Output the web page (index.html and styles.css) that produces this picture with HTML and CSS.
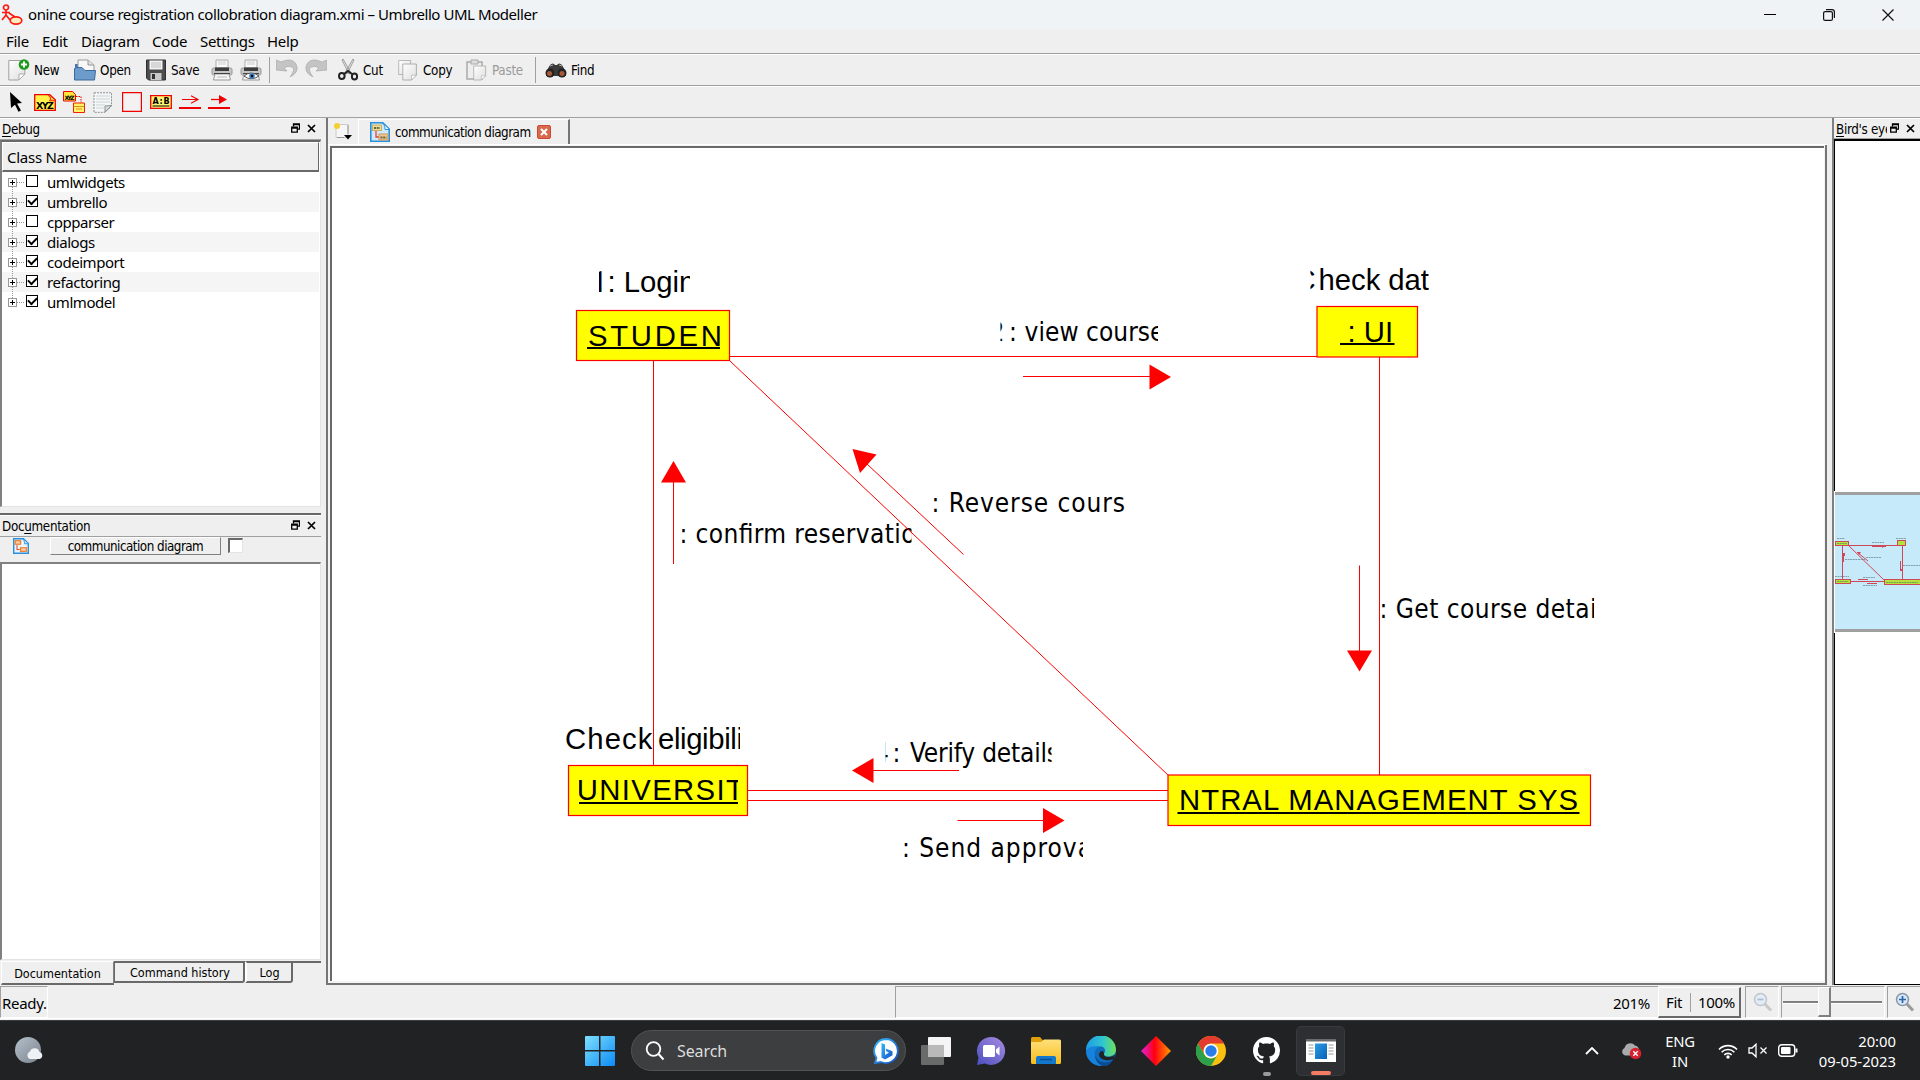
FILE: index.html
```html
<!DOCTYPE html>
<html lang="en">
<head>
<meta charset="utf-8">
<title>Umbrello UML Modeller</title>
<link rel="stylesheet" href="styles.css">
</head>
<body>
<svg class="defs" width="0" height="0">
  <defs>
    <linearGradient id="gWin" x1="0" y1="0" x2="1" y2="1"><stop offset="0" stop-color="#7fe0ff"/><stop offset="1" stop-color="#0a8bf5"/></linearGradient>
    <linearGradient id="gChat" x1="0" y1="1" x2="1" y2="0"><stop offset="0" stop-color="#4a4fc0"/><stop offset="1" stop-color="#a98be0"/></linearGradient>
    <linearGradient id="gFold" x1="0" y1="0" x2="0" y2="1"><stop offset="0" stop-color="#ffe07a"/><stop offset="1" stop-color="#f9bd1c"/></linearGradient>
    <linearGradient id="gEdge" x1="0" y1="0" x2="1" y2="0"><stop offset="0" stop-color="#1f9ae8"/><stop offset=".55" stop-color="#2fc5d0"/><stop offset="1" stop-color="#6fe05a"/></linearGradient>
    <linearGradient id="gDia" x1="0" y1="0" x2="1" y2="0"><stop offset="0" stop-color="#e020e0"/><stop offset=".45" stop-color="#ff0010"/><stop offset="1" stop-color="#ff9a00"/></linearGradient>
    <linearGradient id="gBing" x1="0" y1="0" x2="1" y2="1"><stop offset="0" stop-color="#35b8f5"/><stop offset="1" stop-color="#1450c8"/></linearGradient>
    <linearGradient id="gMoon" x1="0" y1="0" x2="1" y2="1"><stop offset="0" stop-color="#b4c0cc"/><stop offset="1" stop-color="#7b848e"/></linearGradient>
    <linearGradient id="gPrev" x1="0" y1="0" x2="1" y2="1"><stop offset="0" stop-color="#2a9be8"/><stop offset="1" stop-color="#0862b4"/></linearGradient>
    <linearGradient id="gPage" x1="0" y1="0" x2="1" y2="1"><stop offset="0" stop-color="#ffffff"/><stop offset="1" stop-color="#dedede"/></linearGradient>
    <symbol id="page" viewBox="0 0 20 22"><path d="M1 1h17v14l-6 6H1z" fill="url(#gPage)" stroke="#a0a0a0"/><path d="M18 15l-6 6v-6z" fill="#fff" stroke="#a8a8a8" stroke-width=".8"/></symbol>
    <symbol id="printer" viewBox="0 0 22 22"><path d="M5 1h12v8H5z" fill="#fafafa" stroke="#aaa"/><path d="M7 3h8M7 5h8" stroke="#ccc"/><rect x="1" y="9" width="20" height="7" rx="1.5" fill="#c4c4c4" stroke="#999"/><rect x="4" y="8.500" width="14" height="3.500" fill="#3c3c3c"/><path d="M4 15h14l1.500 6h-17z" fill="#f6f6f6" stroke="#999"/><path d="M3 14.500h16" stroke="#444"/><path d="M6 18h10" stroke="#bbb"/></symbol>
    <symbol id="float" viewBox="0 0 9 10"><path d="M2.500 3.500V.8h6v5.400H6.500M2.500 1.500h6" fill="none" stroke="#000" stroke-width="1.300"/><path d="M.7 4.200h5.600v5H.7zM.7 5h5.600" fill="none" stroke="#000" stroke-width="1.300"/></symbol>
    <symbol id="cross" viewBox="0 0 9 9"><path d="M1 1l7 7M8 1L1 8" stroke="#000" stroke-width="1.700"/></symbol>
    <symbol id="diagramIcon" viewBox="0 0 18 18"><path d="M.8.8h11l5.400 5.400v11H.8z" fill="#e6f4fd" stroke="#2a8fdc" stroke-width="1.600"/><path d="M11 1c2 2 2 4 2 5.500h4" fill="#bfe2fa" stroke="#2a8fdc"/><path d="M4.500 8v5h3" fill="none" stroke="#e3502a" stroke-width="1.200"/><rect x="2.500" y="3" width="6" height="4" fill="#fbd0a8" stroke="#f08030" stroke-width="1.400"/><rect x="8.500" y="11" width="6.500" height="4" fill="#fbd0a8" stroke="#f08030" stroke-width="1.400"/></symbol>
    <symbol id="diagramTabIcon" viewBox="0 0 20 20"><path d="M.8.8h12l6.400 6.400v12H.8z" fill="#cfe9fb" stroke="#2a8fdc" stroke-width="1.600"/><path d="M12.500 1c2.500 2 2.500 4.500 2.500 6.500h4" fill="#eef8ff" stroke="#2a8fdc"/><path d="M6 9v6h3" fill="none" stroke="#f0402a" stroke-width="1.300"/><rect x="2.500" y="3" width="9" height="5.500" fill="#e8dc9a" stroke="#c9b060"/><path d="M4 6h6" stroke="#6b6440" stroke-width="2" stroke-dasharray="2 .7"/><rect x="9" y="12" width="9" height="6" fill="#e8c890" stroke="#d09860"/><path d="M10.500 15.500h6" stroke="#6b6440" stroke-width="2" stroke-dasharray="2 .7"/></symbol>
    <symbol id="mag" viewBox="0 0 20 20"><path d="M11.500 11.500l6.500 7" stroke="#9a9a9a" stroke-width="3"/><circle cx="7.500" cy="7.500" r="6" fill="#d8e8f8" stroke="#8796a6" stroke-width="1.500"/></symbol>
  </defs>
</svg>
<div class="window">
  <header class="titlebar">
    <svg class="app-icon" viewBox="0 0 22 22" width="22" height="22"><g fill="none" stroke="#ff1a10" stroke-width="1.700"><circle cx="5" cy="3.500" r="2.500"/><path d="M5 6v6M1 8.500h8M5 11l-4 5M5 11l4 5M8 9l6 4"/><ellipse cx="15" cy="16.500" rx="5.800" ry="3.600" fill="#f9edc0"/></g></svg>
    <h1 class="title">onine course registration collobration diagram.xmi – Umbrello UML Modeller</h1>
    <div class="win-buttons">
      <svg width="12" height="12" viewBox="0 0 12 12"><path d="M0 5.500h12" stroke="#000"/></svg>
      <svg width="12" height="12" viewBox="0 0 12 12" fill="none" stroke="#111" stroke-width="1.200"><rect x=".6" y="2.600" width="8.800" height="8.800" rx="1.500"/><path d="M3 .6h6q2.400 0 2.400 2.400v6"/></svg>
      <svg width="12" height="12" viewBox="0 0 12 12"><path d="M.5.5l11 11M11.500.5l-11 11" stroke="#111" stroke-width="1.200"/></svg>
    </div>
  </header>
  <nav class="menubar">
    <span class="m-file">File</span><span class="m-edit">Edit</span><span class="m-diagram">Diagram</span><span class="m-code">Code</span><span class="m-settings">Settings</span><span class="m-help">Help</span>
  </nav>
  <div class="toolbar main-tools">
    <div class="tool t-new"><svg width="22" height="22" viewBox="0 0 22 22"><path d="M.8 1.500h16V15l-6 6H.8z" fill="url(#gPage)" stroke="#a0a0a0"/><path d="M17 15l-6 6v-6z" fill="#fff" stroke="#aaa"/><circle cx="16" cy="5.500" r="5.300" fill="#1d9a1d"/><path d="M16 2.500v6M13 5.500h6" stroke="#fff" stroke-width="2"/></svg><span>New</span></div>
    <div class="tool t-open"><svg width="22" height="22" viewBox="0 0 22 22"><path d="M1 5h8v12H1z" fill="#4578b0"/><path d="M4 1h10l6 5v9H4z" fill="#f8f8f8" stroke="#999"/><path d="M14 1v5h6" fill="#ddd" stroke="#999"/><path d="M.5 9.500l2-1H8l3 3h10.500l-1 9.500H.5z" fill="#6c9ccc" stroke="#40699b"/></svg><span>Open</span></div>
    <div class="tool t-save"><svg width="20" height="22" viewBox="0 0 20 22"><path d="M.5 1h19v20h-17l-2-2z" fill="#4c4c4c" stroke="#303030"/><path d="M3.500 1.500h13v9h-13z" fill="#f4f4f4"/><path d="M5 4h10M5 6h10M5 8h10" stroke="#bbb"/><path d="M4.500 14h11v7h-11z" fill="#cacaca"/><path d="M6 15h3v5H6z" fill="#333"/></svg><span>Save</span></div>
    <div class="tool t-print"><svg width="22" height="22"><use href="#printer"/></svg></div>
    <div class="tool t-preview"><svg width="22" height="22" viewBox="0 0 22 22"><use href="#printer" width="22" height="22"/><path d="M4 17q7-6 15 0-8 5.500-15 0z" fill="#fff" stroke="#555"/><circle cx="12" cy="17" r="2.800" fill="#3a7cc0"/><circle cx="12" cy="17" r="1.200"/></svg></div>
    <i class="sep"></i>
    <div class="tool t-undo"><svg width="22" height="18" viewBox="0 0 22 18"><path d="M0 1l5 2q11-5 15 2 4 8-6 13 6-8 2-10-4-2-8 1l3 3-11-1z" fill="#c4c4c4" stroke="#adadad" stroke-width=".8"/></svg></div>
    <div class="tool t-redo"><svg width="22" height="18" viewBox="0 0 22 18"><path d="M22 1l-5 2Q6-2 2 5q-4 8 6 13-6-8-2-10 4-2 8 1l-3 3 11-1z" fill="#c4c4c4" stroke="#adadad" stroke-width=".8"/></svg></div>
    <div class="tool t-cut"><svg width="21" height="22" viewBox="0 0 21 22"><path d="M4 1l1-1 8 14-2 1zM16 1l-1-1-8 14 2 1z" fill="#e8e8e8" stroke="#888" stroke-width=".8"/><g fill="none" stroke="#222" stroke-width="2"><ellipse cx="3.800" cy="17" rx="2.800" ry="3"/><ellipse cx="16.500" cy="17.500" rx="2.600" ry="3"/><path d="M6 15l4-3 4 3"/></g></svg><span>Cut</span></div>
    <div class="tool t-copy"><svg width="20" height="22" viewBox="0 0 20 22"><use href="#page" width="14" height="17"/><use href="#page" x="4" y="4" width="16" height="18"/></svg><span>Copy</span></div>
    <div class="tool t-paste"><svg width="22" height="22" viewBox="0 0 22 22"><path d="M1 3h15v17H1z" fill="#eee" stroke="#aaa" stroke-width="1.500"/><path d="M5 1h7v4H5z" fill="#ddd" stroke="#aaa"/><use href="#page" x="7" y="6" width="14" height="16"/></svg><span>Paste</span></div>
    <i class="sep"></i>
    <div class="tool t-find"><svg width="22" height="15" viewBox="0 0 22 15"><path d="M5 2q3-3 5 0h2q2-3 5 0l4 7v4H1V9z" fill="#3a3a3a"/><circle cx="5" cy="10" r="4.500" fill="#222"/><circle cx="17" cy="10" r="4.500" fill="#222"/><circle cx="4.500" cy="10.500" r="2.500" fill="#a85a34"/><circle cx="17" cy="10.500" r="2.500" fill="#a85a34"/><path d="M5 3l3-1M14 2l3 1" stroke="#aaa"/></svg><span>Find</span></div>
  </div>
  <div class="toolbar work-tools">
    <svg width="13" height="20" viewBox="0 0 13 20"><path d="M0 0l12 11-5 .5 4 7-2.500 1.200-3.500-7L1 16z"/></svg>
    <svg width="22" height="17" viewBox="0 0 22 17"><path d="M.7.7h15l5.600 5v10.600H.7z" fill="#fff34a" stroke="#f00000" stroke-width="1.300"/><path d="M14 1q4 3 2 5.500h5" fill="none" stroke="#f04020" stroke-width="1.300"/><text x="2" y="14.500" class="ico-b" font-size="9.500" textLength="18">XYZ</text></svg>
    <svg width="22" height="22" viewBox="0 0 22 22"><path d="M.5.5h9l3 3v6.500H.5z" fill="#ffe23a" stroke="#f00000"/><text x="1.500" y="8.500" class="ico-b" font-size="6" textLength="10">XYZ</text><path d="M13 5.500h5v6" fill="none" stroke="#f00000" stroke-dasharray="1.500 1"/><path d="M10.500 12h11v9.500h-11z" fill="#fff36a" stroke="#f02000"/><path d="M10.500 15.500h11M13 18h6" stroke="#e08a20"/></svg>
    <svg width="20" height="21" viewBox="0 0 20 21"><path d="M1 .8h17.500V14L12 20.300H1z" fill="#f4f7f7" stroke="#8a9090" stroke-dasharray="2 1"/><path d="M3 4h14M3 7h14M3 10h14M3 13h9M3 16h8" stroke="#ccd4d4"/><path d="M18.500 13.500L12 20v-6z" fill="#d8dede" stroke="#8a9090"/></svg>
    <svg width="20" height="20" viewBox="0 0 20 20"><path d="M.6.6h18.800v18.800H.6z" fill="#f3f1f1" stroke="#f00000" stroke-width="1.200"/></svg>
    <svg width="22" height="14" viewBox="0 0 22 14"><path d="M.7.7h20.600v12.600H.7z" fill="#fff56e" stroke="#f00000" stroke-width="1.300"/><text x="2.500" y="9" class="ico-b" font-size="8" textLength="17">A:B</text><path d="M2.500 11h17" stroke="#000"/></svg>
    <svg width="22" height="14" viewBox="0 0 22 14"><path d="M3 4.500h15M12 .8l7 3.700-7 3.700" fill="none" stroke="#f00000" stroke-width="1.100"/><path d="M0 13h22" stroke="#f00000" stroke-width="2"/></svg>
    <svg width="22" height="14" viewBox="0 0 22 14"><path d="M3 4.500h12" stroke="#f00000" stroke-width="1.300"/><path d="M11 0l8 4.500L11 9z" fill="#f00000"/><path d="M0 13h22" stroke="#f00000" stroke-width="2"/></svg>
  </div>

  <div class="workspace">
    <aside class="left">
      <section class="dock debug">
        <div class="dock-head"><span class="w-debug"><u>D</u>ebug</span><svg class="dk-float" width="9" height="10"><use href="#float"/></svg><svg width="9" height="9"><use href="#cross"/></svg></div>
        <div class="tree">
          <div class="tree-head">Class Name</div>
          <ul class="tree-list">
            <li><i class="plus"></i><i class="check"></i><span>umlwidgets</span></li>
            <li><i class="plus"></i><i class="check on"></i><span>umbrello</span></li>
            <li><i class="plus"></i><i class="check"></i><span>cppparser</span></li>
            <li><i class="plus"></i><i class="check on"></i><span>dialogs</span></li>
            <li><i class="plus"></i><i class="check on"></i><span>codeimport</span></li>
            <li><i class="plus"></i><i class="check on"></i><span>refactoring</span></li>
            <li><i class="plus"></i><i class="check on"></i><span>umlmodel</span></li>
          </ul>
        </div>
      </section>
      <section class="dock docs">
        <div class="dock-head"><span class="w-doc">Doc<u>u</u>mentation</span><svg class="dk-float" width="9" height="10"><use href="#float"/></svg><svg width="9" height="9"><use href="#cross"/></svg></div>
        <div class="doc-bar"><svg width="16" height="16"><use href="#diagramIcon"/></svg><div class="doc-name"><span>communication diagram</span></div><i class="doc-check"></i></div>
        <div class="doc-text"></div>
        <div class="dock-tabs"><span class="tab active">Documentation</span><span class="tab hist">Command history</span><span class="tab log">Log</span><i class="fill"></i></div>
      </section>
    </aside>

    <main class="editor">
      <div class="doc-tabs">
        <svg class="new-tab" width="20" height="19" viewBox="0 0 20 19"><path d="M3 2.500h12v13H3z" fill="#f6f6f6" stroke="#ccc"/><path d="M15 3v9M4 15.500h7" stroke="#999"/><circle cx="4" cy="4" r="3" fill="#f5cf30"/><path d="M11 13h8l-4 4.500z"/></svg>
        <div class="doc-tab"><svg width="20" height="20"><use href="#diagramTabIcon"/></svg><span>communication diagram</span><i class="close"><svg width="8" height="8" viewBox="0 0 8 8"><path d="M1 1l6 6M7 1L1 7" stroke="#fff" stroke-width="2"/></svg></i></div>
      </div>
      <div class="canvas">
        <svg class="diagram" width="1492" height="833" viewBox="332 148 1492 833">
          <g fill="#ff0" stroke="#f00" stroke-width="1.200">
            <rect x="576.500" y="310.500" width="153" height="50"/>
            <rect x="1317" y="306.500" width="100.500" height="50.500"/>
            <rect x="568.500" y="765.500" width="179" height="50"/>
            <rect x="1168" y="775" width="422.500" height="50.500"/>
          </g>
          <g class="uml" transform="translate(0 -.8)">
            <svg x="599" y="260" width="91" height="45" viewBox="599 260 91 45"><text x="591" y="292.500"><tspan class="one">1</tspan><tspan x="607.400">: Login</tspan></text></svg>
            <svg x="1310.500" y="260" width="118.500" height="45" viewBox="1310.500 260 118.500 45"><text x="1294.500" y="291">C<tspan x="1318.500" textLength="110.500">heck dat</tspan></text></svg>
            <svg x="560" y="720" width="180" height="45" viewBox="560 720 180 45"><text x="565" y="750" textLength="87.500">Check</text><text x="658" y="750" textLength="107">eligibility</text></svg>
            <text x="588" y="346.500" textLength="134">STUDEN</text>
            <text x="1347.500" y="342.500">: UI</text>
            <svg x="579" y="770" width="159" height="40" viewBox="579 770 159 40"><text x="576.800" y="801" textLength="167">UNIVERSIT</text></svg>
            <text x="1179" y="811" textLength="399">NTRAL MANAGEMENT SYS</text>
          </g>
          <path d="M587 348h133M1340 344h54.500M579 803h159M1177.500 813h402" stroke="#000" stroke-width="2"/>
          <g class="msg" transform="translate(0 -.5)">
            <svg x="1000.500" y="310" width="157.500" height="45" viewBox="1000.500 310 157.500 45"><text x="989.500" y="341">2<tspan x="1009">:</tspan><tspan x="1024.500" textLength="140">view course</tspan></text></svg>
            <svg x="681.500" y="515" width="230" height="45" viewBox="681.500 515 230 45"><text x="679.500" y="543" textLength="236">: confirm reservatio</text></svg>
            <text x="931.500" y="512" textLength="193.500">: Reverse cours</text>
            <svg x="1378" y="590" width="216" height="45" viewBox="1378 590 216 45"><text x="1379.500" y="618" textLength="217">: Get course detai</text></svg>
            <svg x="885.500" y="735" width="166" height="45" viewBox="885.500 735 166 45"><text x="874" y="762">4<tspan x="892.500">:</tspan><tspan x="910" textLength="149">Verify details</tspan></text></svg>
            <svg x="900" y="830" width="183" height="45" viewBox="900 830 183 45"><text x="902" y="857" textLength="190">: Send approva</text></svg>
          </g>
          <g fill="none" stroke="#f00" stroke-width="1">
            <path d="M730 356.500h587M653.500 361v404.500M730 361l438 414M1379.500 357v418M748 790.500h420M748 800.500h420"/>
            <path d="M1023 376.500h128M673.500 480v84M867 464l96.500 90.500M1359.500 565.500v86M872 770.500h87M957.500 820.500h87"/>
          </g>
          <path d="M1149.500 364.500l21.500 12.500-21.500 12.500zM673.500 461l12.500 21.500h-25zM852.500 449l24 5.500-16.500 18.500zM1347 650.500h25l-12.500 21zM852 770.500l21.500-12.500v25zM1043 808l21.500 12.500-21.500 12.500z" fill="#f00"/>
        </svg>
      </div>
    </main>

    <aside class="bird">
      <div class="dock-head"><span class="w-bird"><u>B</u>ird's eye</span><svg class="dk-float" width="9" height="10"><use href="#float"/></svg><svg width="9" height="9"><use href="#cross"/></svg></div>
      <div class="overview">
        <div class="viewport">
          <svg width="85" height="133" viewBox="1835 481 85 133">
            <g fill="#b4e23c" stroke="#d04858"><rect x="1835.500" y="527.500" width="13" height="4"/><rect x="1897.500" y="526.500" width="8" height="5"/><rect x="1835.500" y="565.500" width="15" height="4"/><rect x="1884.500" y="565.500" width="37" height="5"/></g>
            <path d="M1849 531.500h49M1842.500 532v33M1849 532l35 34M1902.500 532v33M1851 567.500h33M1872 532.500h14M1843.500 539v9M1857 538l11 9M1900.500 547v10M1858 565.500h10M1867 569.500h10" fill="none" stroke="#d04858"/>
            <path d="M1885 532l-3-1v3zM1843 539h2v3h-2zM1857 538l4 0-2 3zM1900 555h3v2h-3z" fill="#d04858"/>
            <path d="M1837 524.500h8M1896 524.500h10M1872 528.500h12M1845 545.500h20M1866 543.500h15M1903 551.500h17M1835 562.500h14M1863 563.500h12M1863 571.500h14M1837 529.500h10M1837 567.500h11M1886 568.500h32" stroke="#4a6070" stroke-opacity=".55" stroke-dasharray="2 .6"/>
          </svg>
        </div>
      </div>
    </aside>
  </div>

  <footer class="statusbar">
    <div class="cell ready">Ready.</div>
    <div class="cell message"><span class="zoom-val">201%</span></div>
    <div class="zoom-buttons"><span class="fit">Fit</span><span class="full">100%</span></div>
    <div class="cell zoom-out"><svg width="20" height="20" opacity=".45" viewBox="0 0 20 20"><use href="#mag" width="20" height="20"/><path d="M4.500 7.500h6" stroke="#4a86c8" stroke-width="1.700"/></svg></div>
    <div class="cell slider"><i class="handle"></i></div>
    <div class="cell zoom-in"><svg width="20" height="20" viewBox="0 0 20 20"><use href="#mag" width="20" height="20"/><path d="M4 7.500h7M7.500 4v7" stroke="#2a66a8" stroke-width="1.700"/></svg></div>
  </footer>
</div>

<div class="taskbar">
  <svg class="weather" width="30" height="28" viewBox="0 0 30 28"><circle cx="13" cy="13" r="13" fill="url(#gMoon)"/><path d="M15 22a4 4 0 0 1 0-7.500 5 5 0 0 1 9.500.5 3.600 3.600 0 0 1 0 7z" fill="#eef1f5"/></svg>
  <svg class="start" width="30" height="30" viewBox="0 0 30 30"><path d="M0 1q0-1 1-1h13v14H0zM15.500 0H29q1 0 1 1v13H15.500zM0 15.500h14V30H1q-1 0-1-1zM15.500 15.500H30V29q0 1-1 1H15.500z" fill="url(#gWin)"/></svg>
  <div class="search"><svg width="20" height="20" viewBox="0 0 20 20"><circle cx="8.500" cy="8" r="6.800" fill="none" stroke="#fff" stroke-width="1.800"/><path d="M13.500 13l5 5.500" stroke="#fff" stroke-width="2"/></svg><span>Search</span>
    <svg class="bing" width="26" height="26" viewBox="0 0 26 26"><path d="M13 1a12 12 0 1 1-5 23l-6 1 1.500-5A12 12 0 0 1 13 1z" fill="#fff" stroke="url(#gBing)" stroke-width="1.800"/><path d="M8.500 5l3.500 1.500v10.500l4-2.500-2.500-1-1-3 7 2.800v4L12 21.500l-3.500-2z" fill="url(#gBing)"/></svg></div>
  <svg class="tb-icon tasks" width="30" height="28" viewBox="0 0 30 28"><rect x="7" y="0" width="23" height="20" rx="1" fill="#f4f4f4"/><rect x="0" y="8" width="23" height="20" rx="1" fill="#777" fill-opacity=".85"/><rect x="7" y="8" width="16" height="12" fill="#b9b9b9"/></svg>
  <svg class="tb-icon chat" width="30" height="30" viewBox="0 0 30 30"><path d="M15 1a14 14 0 1 1-6 26.600L1 29l1.500-7.500A14 14 0 0 1 15 1z" fill="url(#gChat)"/><rect x="7" y="9" width="12" height="12" rx="1.500" fill="#fff"/><path d="M20 13.500l3.500-3v9L20 16.500z" fill="#fff"/></svg>
  <svg class="tb-icon files" width="30" height="27" viewBox="0 0 30 27"><path d="M0 1.500Q0 0 1.500 0H9l3 3.500V8H0z" fill="#e0a008"/><path d="M0 5h10l3-2.500h15.500Q30 2.500 30 4v21.500q0 1.500-1.500 1.500h-27Q0 27 0 25.500z" fill="url(#gFold)"/><path d="M5 27v-6q0-2 2-2h16q2 0 2 2v6z" fill="#1478cc"/><path d="M9 22.500h12" stroke="#0a4f94" stroke-width="1.500"/></svg>
  <svg class="tb-icon edge" width="30" height="30" viewBox="0 0 30 30"><circle cx="15" cy="15" r="15" fill="#0f6cbd"/><path d="M0 15a15 15 0 0 1 30-1.500c0 5-4 7-7.500 7-4 0-5-1.500-4.500-3 2-2 1.500-7-4-7C7 10.500 1 13 0 15z" fill="url(#gEdge)"/><path d="M0 15c2-4 8-6 13-4-4 2-5 6-4 9.500 1 4.500 5 8 9 9A15 15 0 0 1 0 15z" fill="#1682dc"/><path d="M9.500 19c0 4 5 8 10.500 7.500 3.500-.3 6-2 7.500-3.500-3 7-9 8-11 7-5-2-8-7-7-11z" fill="#0c4a92"/><path d="M18 17.500c-.5 2 1 3.500 4.500 3.500 3 0 5-.8 6.500-2.500l-1 4.500c-4 2-14 2-15-4 0-2.500 2-4 3-4 1.500 0 2 1.500 2 2.500z" fill="#202224"/></svg>
  <svg class="tb-icon dia" width="30" height="30" viewBox="0 0 30 30"><path d="M15 0l15 15-15 15L0 15z" fill="url(#gDia)"/></svg>
  <svg class="tb-icon chrome" width="30" height="30" viewBox="0 0 30 30"><circle cx="15" cy="15" r="15" fill="#fbbf12"/><path d="M2 7.500A15 15 0 0 1 28 7.500H15A7.500 7.500 0 0 0 8.500 18.800z" fill="#e33b2e"/><path d="M2 7.500l6.500 11.300A7.500 7.500 0 0 0 21.500 18.800L15 30A15 15 0 0 1 2 7.500z" fill="#2da04a"/><circle cx="15" cy="15" r="7.300" fill="#fff"/><circle cx="15" cy="15" r="5.700" fill="#2b7de9"/></svg>
  <div class="tb-run github"><svg width="27" height="27" viewBox="0 0 16 16"><path fill="#fff" d="M8 0C3.580 0 0 3.580 0 8c0 3.540 2.290 6.530 5.470 7.590.4.070.55-.17.55-.38 0-.19-.01-.82-.01-1.490-2.010.37-2.530-.49-2.690-.94-.09-.23-.48-.94-.82-1.130-.28-.15-.68-.52-.01-.53.63-.01 1.080.58 1.230.82.72 1.210 1.870.87 2.330.66.07-.52.28-.87.51-1.070-1.780-.2-3.640-.89-3.640-3.950 0-.87.31-1.590.82-2.150-.08-.2-.36-1.020.08-2.120 0 0 .67-.21 2.200.82.64-.18 1.320-.27 2-.27s1.360.09 2 .27c1.530-1.040 2.200-.82 2.200-.82.44 1.100.16 1.920.08 2.120.51.56.82 1.270.82 2.150 0 3.070-1.870 3.750-3.650 3.950.29.25.54.73.54 1.480 0 1.070-.01 1.930-.01 2.200 0 .21.15.46.55.38A8.010 8.010 0 0 0 16 8c0-4.420-3.580-8-8-8z"/></svg><i class="dot"></i></div>
  <div class="tb-run current"><svg width="30" height="23" viewBox="0 0 30 23"><rect width="30" height="23" fill="#fff"/><path d="M0 0h30v2.500H0z" fill="#6c6c6c"/><path d="M2.500 6h5M2.500 9h5M2.500 12h5M2.500 15h5M22.500 6h5M22.500 9h5M22.500 12h5M22.500 15h5" stroke="#999"/><rect x="9" y="4.500" width="12" height="15.500" fill="url(#gPrev)"/></svg><i class="dot"></i></div>
  <div class="tray">
    <svg class="chev" width="14" height="8" viewBox="0 0 14 8"><path d="M1 7l6-6 6 6" fill="none" stroke="#fff" stroke-width="1.800"/></svg>
    <svg class="cloud" width="21" height="18" viewBox="0 0 21 18"><path d="M4 13.500A4 4 0 0 1 3.500 6 6 6 0 0 1 14 3.500 5 5 0 0 1 18 8l-4 5.500z" fill="#aaa"/><circle cx="14.500" cy="11.500" r="5.800" fill="#d8202e"/><path d="M12.300 9.300l4.400 4.400M16.700 9.300l-4.400 4.400" stroke="#fff" stroke-width="1.400"/></svg>
    <div class="lang"><span>ENG</span><span>IN</span></div>
    <svg class="wifi" width="20" height="16" viewBox="0 0 20 16"><g fill="none" stroke="#fff" stroke-width="1.600"><path d="M1 6.500a12.500 12.500 0 0 1 18 0M3.600 9.200a9 9 0 0 1 12.800 0M6.300 11.900a5.200 5.200 0 0 1 7.400 0"/></g><circle cx="10" cy="14" r="1.700" fill="#fff"/></svg>
    <svg class="mute" width="20" height="15" viewBox="0 0 20 15"><path d="M1 5h3l4-3.800v12.600L4 10H1z" fill="none" stroke="#fff" stroke-width="1.300"/><path d="M12.500 4.500l6 6M18.500 4.500l-6 6" stroke="#fff" stroke-width="1.300"/></svg>
    <svg class="batt" width="20" height="13" viewBox="0 0 20 13"><rect x=".7" y=".7" width="16" height="11.600" rx="3" fill="none" stroke="#fff" stroke-width="1.400"/><rect x="3" y="3" width="9.500" height="7" rx="1" fill="#fff"/><path d="M18.500 4.500v4" stroke="#fff" stroke-width="2"/></svg>
    <div class="clock"><span>20:00</span><span>09-05-2023</span></div>
  </div>
</div>
</body>
</html>
```
FILE: styles.css
```css
* { box-sizing: border-box; }
body { margin: 0; width: 1920px; height: 1080px; overflow: hidden; background: #efefef; color: #000; font: 13.3px "DejaVu Sans Condensed", "DejaVu Sans", sans-serif; display: flex; flex-direction: column; }
.defs { position: absolute; }
svg { display: block; flex: none; }
i { font-style: normal; display: block; flex: none; }
span { white-space: nowrap; }
.ico-b { font-family: "DejaVu Sans", sans-serif; font-weight: bold; }

.window { height: 1020px; display: flex; flex-direction: column; }
.titlebar { height: 29px; background: #f0f3f6; display: flex; align-items: center; padding-left: 1px; }
.title { margin: 0 0 1px 5px; font: 400 15px/28px "Noto Sans", sans-serif; letter-spacing: -0.44px; }
.win-buttons { margin-left: auto; display: flex; gap: 47px; padding-right: 26px; }

.menubar { height: 25px; border-bottom: 1px solid #a0a0a0; display: flex; font: 15px/24px "Noto Sans", sans-serif; letter-spacing: -0.3px; padding-left: 6px; }
.m-file { width: 36px; }
.m-edit { width: 39px; }
.m-diagram { width: 71px; }
.m-code { width: 48px; }
.m-settings { width: 67px; }

.toolbar { border-top: 1px solid #fff; border-bottom: 1px solid #a0a0a0; display: flex; align-items: center; height: 32px; }
.main-tools { padding-left: 8px; }
.tool { display: flex; align-items: center; gap: 4px; letter-spacing: -0.25px; }
.t-new { width: 66px; } .t-open { width: 72px; } .t-save { width: 65px; gap: 5px; }
.t-print { width: 29px; } .t-preview { width: 29px; } .t-undo { width: 29px; padding-bottom: 5px; } .t-redo { width: 33px; padding-bottom: 5px; }
.t-cut { width: 60px; } .t-copy { width: 68px; gap: 5px; } .t-paste { width: 69px; color: #9a9a9a; }
.sep { width: 1px; height: 26px; background: #a0a0a0; margin-right: 6px; }
.t-paste + .sep { margin-right: 9px; }
.work-tools { padding-left: 10px; height: 32px; }
.work-tools svg { margin-right: 7px; }
.work-tools svg:nth-child(1) { margin-right: 11px; }
.work-tools svg:nth-child(3) { margin-right: 8px; }
.work-tools svg:nth-child(4) { margin-right: 9px; }
.work-tools svg:nth-child(5) { margin-right: 8px; }

.workspace { height: 867px; display: flex; }
.left { width: 326px; display: flex; flex-direction: column; }
.dock { width: 321px; }
.debug { height: 396px; }
.dock-head { height: 22px; display: flex; align-items: flex-start; line-height: 20px; padding: 1px 5px 0 2px; border-top: 1px solid #fff; border-bottom: 1px solid #a0a0a0; letter-spacing: -0.3px; }
.dock-head u { text-underline-offset: 2px; }
.dock-head .dk-float { margin: 3px 7px 0 auto; }
.dock-head svg:last-child { margin-top: 4px; }
.tree { height: 367px; border: 1px solid #a0a0a0; border-top: 2px solid #696969; border-right-color: #e3e3e3; border-bottom-color: #e3e3e3; border-left: 2px solid #808080; background: #fff; font: 15px/20px "Noto Sans", sans-serif; letter-spacing: -0.45px; }
.tree-head { height: 30px; width: 317px; background: #efefef; border: 1px solid #fff; border-right: 1px solid #696969; border-bottom: 2px solid #696969; padding-left: 4px; line-height: 28px; letter-spacing: -0.25px; }
.tree-list { list-style: none; margin: 0; padding: 0; width: 317px; }
.tree-list li { height: 20px; display: flex; align-items: flex-start; padding-left: 6px; }
.tree-list li:nth-child(even) { background: #f5f5f5; }
.plus { width: 9px; height: 9px; margin: 6px 9px 0 0; border: 1px solid #999; background: linear-gradient(#000, #000) 1px 3px / 5px 1px no-repeat, linear-gradient(#000, #000) 3px 1px / 1px 5px no-repeat, #fff; position: relative; }
.plus::before { content: ""; position: absolute; left: 3px; top: 8px; height: 11px; border-left: 1px dotted #999; }
.plus::after { content: ""; position: absolute; left: 8px; top: 3px; width: 7px; border-top: 1px dotted #999; }
li:last-child .plus::before { display: none; }
.check { width: 12px; height: 12px; margin: 3px 9px 0 0; border: 1px solid #000; background: #fff; position: relative; }
.check.on::after { content: ""; position: absolute; left: 1px; top: 1px; width: 7px; height: 4px; border: solid #000; border-width: 0 0 2px 2px; transform: rotate(-45deg); }

.docs { border-top: 2px solid #696969; margin-top: -1px; height: 472px; display: flex; flex-direction: column; }
.doc-bar { height: 25px; display: flex; align-items: flex-start; padding: 1px 0 0 13px; }
.doc-name { width: 171px; height: 18px; margin: -1px 7px 0 21px; border: 1px solid #fff; border-right-color: #808080; border-bottom-color: #808080; text-align: center; line-height: 17px; letter-spacing: -0.5px; }
.doc-check { width: 15px; height: 15px; border: 1px solid #e3e3e3; border-top: 2px solid #696969; border-left: 2px solid #696969; background: #fff; }
.doc-text { height: 398px; background: #fff; border: 2px solid #808080; border-width: 2px 1px 1px 2px; border-right-color: #e3e3e3; border-bottom-color: #e3e3e3; }
.dock-tabs { display: flex; align-items: flex-start; margin-top: 1px; font-size: 12.5px; }
.tab { border: 1px solid #696969; text-align: center; }
.tab.active { width: 113px; height: 24px; margin-left: 1px; border-color: #fff #808080 #696969 #fff; border-bottom-width: 2px; line-height: 24px; }
.tab.hist { width: 131px; height: 22px; border-width: 2px 2px 2px 1px; line-height: 20px; border-radius: 0 0 3px 0; padding-left: 2px; }
.tab.log { width: 48px; height: 22px; border-width: 2px; border-left-color: #fff; line-height: 20px; border-radius: 0 0 3px 0; padding-left: 1px; }
.fill { flex: 1; border-top: 2px solid #696969; }

.editor { width: 1501px; border-left: 2px solid #757575; display: flex; flex-direction: column; }
.doc-tabs { height: 27px; display: flex; align-items: flex-start; border-bottom: 1px solid #fff; }
.new-tab { margin: 4px 5px 0 5px; }
.doc-tab { width: 212px; height: 25px; display: flex; align-items: center; padding-left: 11px; border-top: 1px solid #fff; border-left: 1px solid #fff; border-right: 2px solid #757575; margin-top: 1px; letter-spacing: -0.5px; }
.doc-tab span { margin-left: 5px; width: 138px; }
.close { width: 14px; height: 14px; border-radius: 2px; background: #d86a50; border: 1px solid #c84a30; display: flex; align-items: center; justify-content: center; margin-left: 4px; }
.canvas { height: 840px; border-right: 2px solid #757575; border-bottom: 2px solid #757575; padding: 1px 1px 1px 2px; background: #f4f4f4; }
.diagram { background: #fff; border-top: 2px solid #696969; border-left: 2px solid #696969; width: 1494px; height: 835px; }
.uml { font: 29.3px "Liberation Sans", sans-serif; }
.one { font-family: Roboto, sans-serif; }
.msg { font: 26px "DejaVu Sans Condensed", "DejaVu Sans", sans-serif; }

.bird { width: 88px; margin-left: 5px; border-left: 2px solid #808080; }
.bird .dock-head { height: 21px; padding-right: 5px; }
.bird .w-bird { width: 51px; overflow: hidden; }
.overview { height: 846px; background: #fff; border: 1px solid #000; border-right: 0; padding-top: 351px; border-top-width: 2px; }
.viewport { border: 3px solid #a0a0a0; border-width: 3px 0; height: 140px; background: #c6eafa; outline: 1px solid #fff; }

.statusbar { height: 34px; display: flex; border-bottom: 1px solid #fff; font: 15px/29px "Noto Sans", sans-serif; letter-spacing: -0.3px; padding-top: 1px; }
.cell { height: 32px; border: 1px solid #a0a0a0; border-right-color: #fff; border-bottom-color: #fff; display: flex; align-items: center; }
.ready { width: 48px; padding-left: 1px; padding-top: 2px; }
.message { width: 763px; margin-left: 847px; border-right: 0; padding-left: 717px; padding-top: 2px; }
.zoom-buttons { width: 83px; height: 31px; margin-top: 1px; border: 1px solid #fff; border-right: 2px solid #696969; border-bottom: 2px solid #696969; display: flex; padding-left: 7px; align-items: center; }
.fit { width: 24px; }
.full { border-left: 1px solid #a0a0a0; padding-left: 7px; line-height: 19px; }
.zoom-out { width: 34px; margin-left: 4px; padding-left: 7px; }
.slider { width: 104px; margin-left: 2px; padding-left: 36px; background: linear-gradient(#808080 0 2px, #fff 2px 3px) 1px 14px / 99px 3px no-repeat; }
.handle { width: 13px; height: 30px; background: #efefef; border: 1px solid #fff; border-right: 2px solid #808080; border-bottom: 2px solid #808080; }
.zoom-in { flex: 1; margin-left: 2px; padding-left: 7px; border-right: 0; }

.taskbar { height: 60px; background: #202224; border-top: 1px solid #3a3f42; display: flex; align-items: center; color: #fff; font-family: "Noto Sans", sans-serif; }
.weather { margin-left: 15px; }
.start { margin-left: 540px; }
.search { width: 275px; height: 41px; margin-left: 16px; border-radius: 21px; background: #3c3e40; border: 1px solid #515355; display: flex; align-items: center; padding-left: 13px; font-size: 16px; color: #ddd; }
.search span { margin-left: 12px; letter-spacing: -0.1px; }
.bing { margin: 0 6px 0 auto; }
.tb-icon { margin-left: 25px; }
.tasks { margin-left: 15px; }
.github { margin-left: 16px; }
.tb-run { width: 49px; height: 50px; display: flex; flex-direction: column; align-items: center; justify-content: center; position: relative; }
.dot { position: absolute; bottom: 0; width: 8px; height: 4px; border-radius: 2px; background: #9a9a9a; }
.current { margin-left: 5px; background: #2d2f32; border: 1px solid #383a3d; border-radius: 5px; }
.current .dot { width: 20px; background: #f47c62; }
.tray { margin-left: auto; display: flex; align-items: center; padding-right: 24px; font-size: 14.8px; line-height: 20px; }
.cloud { margin-left: 22px; }
.lang { width: 36px; margin-left: 20px; text-align: center; display: flex; flex-direction: column; letter-spacing: -0.2px; }
.wifi { margin-left: 20px; } .mute { margin-left: 10px; } .batt { margin-left: 10px; }
.clock { width: 80px; margin-left: 18px; text-align: right; display: flex; flex-direction: column; }
```
